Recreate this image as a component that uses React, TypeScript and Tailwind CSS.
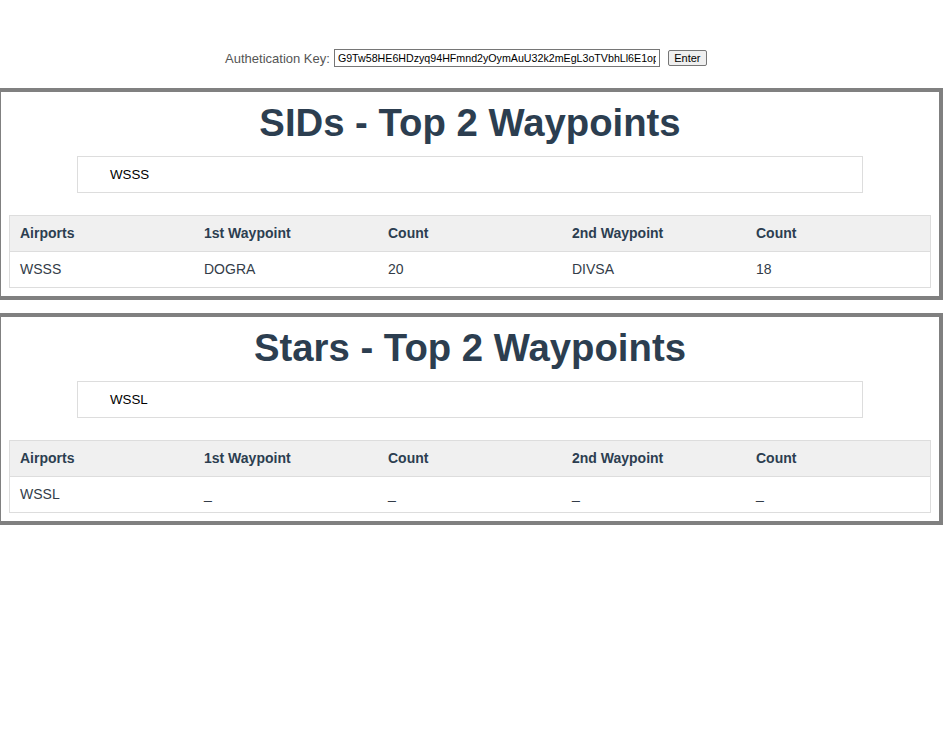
import React from 'react';

const authKey = 'G9Tw58HE6HDzyq94HFmnd2yOymAuU32k2mEgL3oTVbhLl6E1op';

interface WaypointRow {
  airport: string;
  first: string;
  firstCount: string;
  second: string;
  secondCount: string;
}

interface PanelProps {
  title: string;
  filter: string;
  rows: WaypointRow[];
}

const headers = ['Airports', '1st Waypoint', 'Count', '2nd Waypoint', 'Count'];

const WaypointPanel: React.FC<PanelProps> = ({ title, filter, rows }) => {
  return (
    <div className="-ml-[3px] w-[946px] border-4 border-[#808080] px-2 pb-2 pt-[9px]">
      <h1 className="text-center text-[38.3px] font-bold leading-[44px] text-[#2c3e50]">{title}</h1>

      {/* airport filter */}
      <div className="mx-auto mt-[11px] flex h-[37px] w-[786px] items-center border border-[#dddddd] pl-[32px] text-[13.33px] text-black">
        {filter}
      </div>

      <div className="mt-[22px] border border-[#dddddd] text-[14px] text-[#333c48]">
        <div className="grid h-[36px] grid-cols-5 items-center border-b border-[#dddddd] bg-[#f0f0f0] font-bold text-[#2c3e50]">
          {headers.map((h, i) => (
            <div key={i} className="pl-[10px]">{h}</div>
          ))}
        </div>
        {rows.map((r) => (
          <div key={r.airport} className="grid h-[35px] grid-cols-5 items-center">
            <div className="pl-[10px]">{r.airport}</div>
            <div className="pl-[10px]">{r.first}</div>
            <div className="pl-[10px]">{r.firstCount}</div>
            <div className="pl-[10px]">{r.second}</div>
            <div className="pl-[10px]">{r.secondCount}</div>
          </div>
        ))}
      </div>
    </div>
  );
};

const App: React.FC = () => {
  return (
    <div className="min-h-[747px] w-[943px] overflow-hidden bg-white font-['Liberation_Sans',Arial,sans-serif]">
      {/* auth key bar */}
      <div className="mt-[49px] flex h-[18px] items-center justify-center pr-[11px] leading-none">
        <span className="text-[13px] text-[#555555]">Authetication Key:</span>
        <input
          readOnly
          value={authKey}
          className="ml-[4px] h-[18px] w-[326px] border border-[#767676] px-[3px] text-[10.67px] leading-none text-black outline-none"
        />
        <button className="ml-[8px] h-[16px] w-[39px] rounded-[2px] border border-[#767676] bg-[#efefef] text-[11px] leading-none text-black">
          Enter
        </button>
      </div>

      <div className="mt-[21px]">
        <WaypointPanel
          title="SIDs - Top 2 Waypoints"
          filter="WSSS"
          rows={[{ airport: 'WSSS', first: 'DOGRA', firstCount: '20', second: 'DIVSA', secondCount: '18' }]}
        />
      </div>

      <div className="mt-[13px]">
        <WaypointPanel
          title="Stars - Top 2 Waypoints"
          filter="WSSL"
          rows={[{ airport: 'WSSL', first: '_', firstCount: '_', second: '_', secondCount: '_' }]}
        />
      </div>
    </div>
  );
};

export default App;
